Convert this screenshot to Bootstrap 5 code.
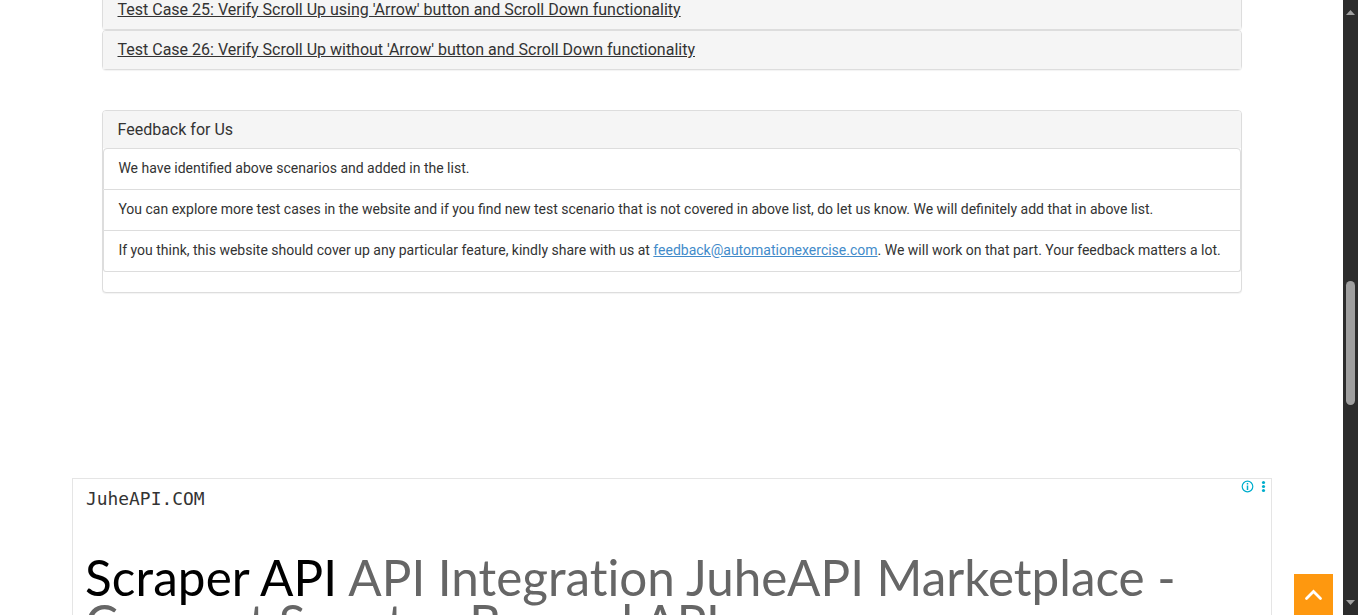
<!DOCTYPE html>
<html lang="en">
<head>
<meta charset="utf-8">
<title>Test Cases</title>
<meta name="viewport" content="width=device-width, initial-scale=1">
<link href="https://cdn.jsdelivr.net/npm/bootstrap@5.3.0/dist/css/bootstrap.min.css" rel="stylesheet">
<style>
body{font-family:Roboto,sans-serif;font-size:14px;line-height:20px;color:#333;height:615px}
.page-main{width:1343px}
.panels{width:1140px;margin-left:102px}
.panel-box{--bs-card-border-color:#ddd;--bs-card-border-radius:4px;--bs-card-inner-border-radius:3px;--bs-card-color:#333;box-shadow:0 1px 1px rgba(0,0,0,.05)}
.panel-head{background:#f5f5f5;font-size:16px;line-height:18px;padding:10px 14.5px}
.case-head{height:38px;border:0;border-radius:3px}
.case-head a{color:#333}
.first-case{margin-top:-10px}
.feedback{margin-top:40px;height:183px}
.feedback .panel-head{height:37px;border:0;border-radius:3px 3px 0 0}
.feedback .list-group{--bs-list-group-border-color:#ddd;--bs-list-group-border-radius:4px;--bs-list-group-color:#333;background:linear-gradient(#f5f5f5 4px,#fff 4px)}
.feedback .list-group-item{padding:9px 14.4px 11px}
.mail{color:#428bca}
.ad{width:1200px;height:137px;margin:185px 0 0 72px;border:1px solid #e5e5e5;border-bottom:0}
.ad-brand{font:17.9px/24px "DejaVu Sans Mono",monospace;color:#333;padding:8px 0 0 13px}
.ad-title{font:49.4px/45px Lato,sans-serif;font-variant-ligatures:no-common-ligatures;color:#666;margin:44px 0 0 12px;width:1150px}
.ad-title .lead-in{color:#000;letter-spacing:.12px}
.ad-title .tail{letter-spacing:-.25px}
.ad-marks{top:1px;right:1px}
.to-top{right:25px;bottom:0;width:39px;height:41px;background:#fe980f}
.scroll-track{width:15px;background:#2c2c2c}
.scroll-thumb{top:281px;left:3px;width:9px;height:124px;background:#9f9f9f;border-radius:5px}
.arrow-up{top:10px;left:3px}
.arrow-down{bottom:10px;left:3px}
</style>
</head>
<body class="bg-white d-flex overflow-hidden position-relative">
<main class="page-main position-relative flex-shrink-0 overflow-hidden vh-100">
  <section class="panels">
    <div class="card panel-box first-case"><div class="card-header panel-head case-head"><a href="#">Test Case 25: Verify Scroll Up using 'Arrow' button and Scroll Down functionality</a></div></div>
    <div class="card panel-box"><div class="card-header panel-head case-head"><a href="#">Test Case 26: Verify Scroll Up without 'Arrow' button and Scroll Down functionality</a></div></div>
    <div class="card panel-box feedback">
      <div class="card-header panel-head">Feedback for Us</div>
      <ul class="list-group">
        <li class="list-group-item">We have identified above scenarios and added in the list.</li>
        <li class="list-group-item">You can explore more test cases in the website and if you find new test scenario that is not covered in above list, do let us know. We will definitely add that in above list.</li>
        <li class="list-group-item">If you think, this website should cover up any particular feature, kindly share with us at <a class="mail" href="#">feedback@automationexercise.com</a>. We will work on that part. Your feedback matters a lot.</li>
      </ul>
    </div>
  </section>
  <section class="ad position-relative overflow-hidden">
    <div class="ad-brand">JuheAPI.COM</div>
    <div class="ad-title"><span class="lead-in">Scraper API</span> API Integration JuheAPI Marketplace - <span class="tail">Connect Smarter, Beyond API</span></div>
    <svg class="ad-marks position-absolute" width="30" height="14" viewBox="0 0 30 14"><circle cx="7.5" cy="6.5" r="5.3" fill="none" stroke="#00aecd" stroke-width="1.2"/><path d="M7.5 3v1.5M7.5 5.5v4.5" stroke="#00aecd" stroke-width="1.5"/><g fill="#00aecd"><circle cx="23.5" cy="2.5" r="1.6"/><circle cx="23.5" cy="6.5" r="1.6"/><circle cx="23.5" cy="10.5" r="1.6"/></g></svg>
  </section>
</main>
<a href="#" class="to-top position-absolute" aria-label="Scroll up"><svg class="d-block" width="39" height="41" viewBox="0 0 39 41"><path d="M12.5 24.5l7-7 7 7" fill="none" stroke="#fff" stroke-width="2.8" stroke-linecap="round"/></svg></a>
<aside class="scroll-track position-relative flex-shrink-0">
  <svg class="arrow-up position-absolute" width="9" height="5"><path d="M0 5L4.5 0 9 5z" fill="#9f9f9f"/></svg>
  <div class="scroll-thumb position-absolute"></div>
  <svg class="arrow-down position-absolute" width="9" height="5"><path d="M0 0L4.5 5 9 0z" fill="#9f9f9f"/></svg>
</aside>
</body>
</html>
